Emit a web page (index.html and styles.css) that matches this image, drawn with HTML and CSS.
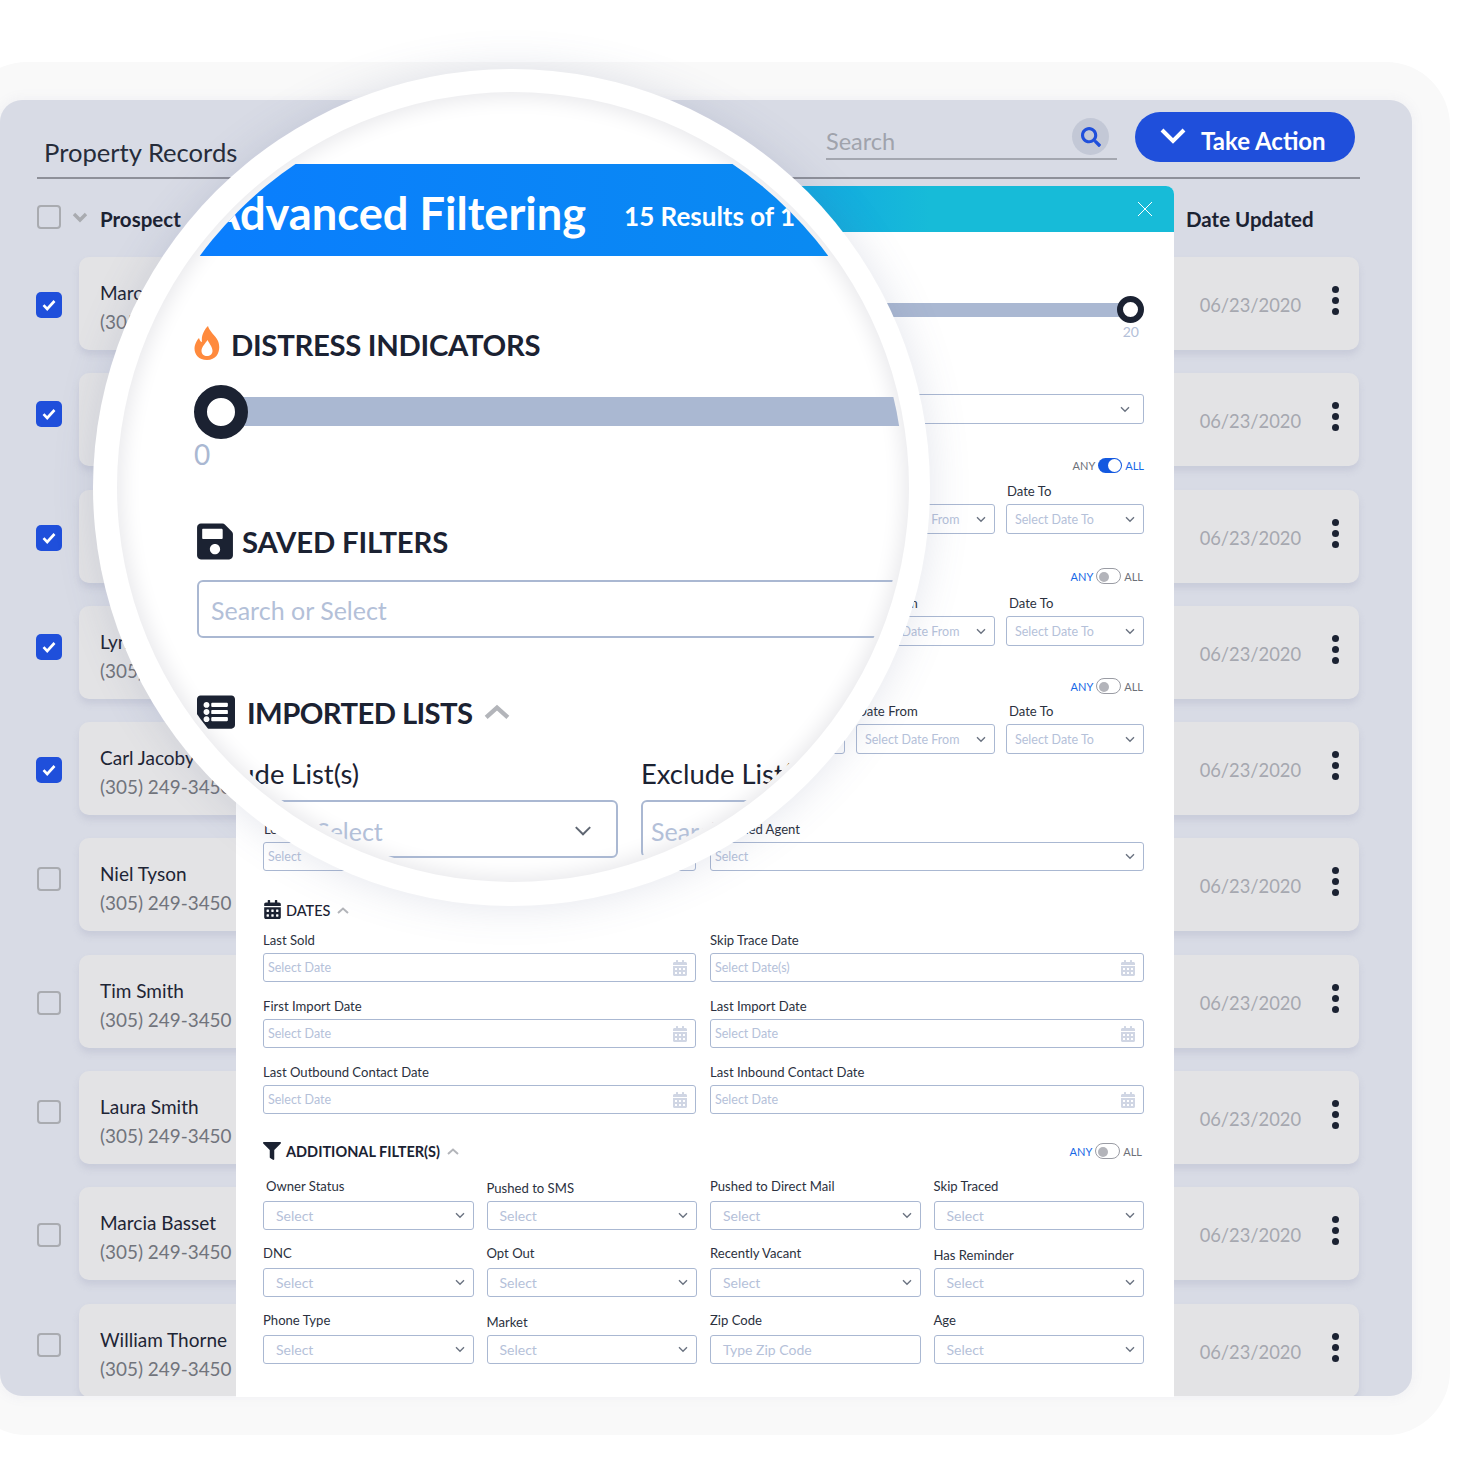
FILE: index.html
```html
<!DOCTYPE html>
<html>
<head>
  <meta charset="utf-8">
  <title>Property Records</title>
  <link rel="stylesheet" href="styles.css">
</head>
<body>

<svg class="sprite" xmlns="http://www.w3.org/2000/svg">
  <symbol id="i-chev" viewBox="0 0 12 8"><path d="M1.2 1.4 6 6.2l4.8-4.8" fill="none" stroke="currentColor" stroke-width="1.6"/></symbol>
  <symbol id="i-up" viewBox="0 0 24 14"><path d="M2 12 12 3l10 9" fill="none" stroke="currentColor" stroke-width="4"/></symbol>
  <symbol id="i-cal" viewBox="0 0 448 512"><path fill="currentColor" d="M0 464c0 26.5 21.5 48 48 48h352c26.5 0 48-21.5 48-48V192H0v272zm320-196c0-6.6 5.4-12 12-12h40c6.6 0 12 5.4 12 12v40c0 6.6-5.4 12-12 12h-40c-6.6 0-12-5.4-12-12v-40zm0 128c0-6.6 5.4-12 12-12h40c6.6 0 12 5.4 12 12v40c0 6.6-5.4 12-12 12h-40c-6.6 0-12-5.4-12-12v-40zM192 268c0-6.6 5.4-12 12-12h40c6.6 0 12 5.4 12 12v40c0 6.6-5.4 12-12 12h-40c-6.6 0-12-5.4-12-12v-40zm0 128c0-6.6 5.4-12 12-12h40c6.6 0 12 5.4 12 12v40c0 6.6-5.4 12-12 12h-40c-6.6 0-12-5.4-12-12v-40zM64 268c0-6.6 5.4-12 12-12h40c6.6 0 12 5.4 12 12v40c0 6.6-5.4 12-12 12H76c-6.6 0-12-5.4-12-12v-40zm0 128c0-6.6 5.4-12 12-12h40c6.6 0 12 5.4 12 12v40c0 6.6-5.4 12-12 12H76c-6.6 0-12-5.4-12-12v-40zM400 64h-48V16c0-8.8-7.2-16-16-16h-32c-8.8 0-16 7.2-16 16v48H160V16c0-8.8-7.2-16-16-16h-32c-8.8 0-16 7.2-16 16v48H48C21.5 64 0 85.5 0 112v48h448v-48c0-26.5-21.5-48-48-48z"/></symbol>
  <symbol id="i-check" viewBox="0 0 14 12"><path d="M1.5 6.2 5.2 10l7.3-8" fill="none" stroke="#fff" stroke-width="2.6"/></symbol>
</svg>

<div class="stage">
  <div class="halo">
    <div class="board">
      <div class="top-bar">
        <div class="page-title">Property Records</div>
        <div class="search">
          <span>Search</span>
          <span class="search-btn">
            <svg viewBox="0 0 512 512"><path fill="#1f4fdb" d="M505 442.7L405.3 343c-4.5-4.5-10.6-7-17-7H372c27.6-35.3 44-79.7 44-128C416 93.1 322.9 0 208 0S0 93.1 0 208s93.1 208 208 208c48.3 0 92.7-16.4 128-44v16.3c0 6.4 2.5 12.5 7 17l99.7 99.7c9.4 9.4 24.6 9.4 33.9 0l28.3-28.3c9.4-9.4 9.4-24.6.1-34zM208 336c-70.7 0-128-57.2-128-128 0-70.7 57.2-128 128-128 70.7 0 128 57.2 128 128 0 70.7-57.2 128-128 128z"/></svg>
          </span>
        </div>
        <button class="take-action">
          <svg viewBox="0 0 28 18"><path d="M3 3l11 11L25 3" fill="none" stroke="#fff" stroke-width="4"/></svg>
          <span>Take Action</span>
        </button>
      </div>

      <div class="col-head">
        <span class="box"></span>
        <svg class="head-chev" viewBox="0 0 16 11"><path d="M2 2l6 6 6-6" fill="none" stroke="#a9abb0" stroke-width="3.4"/></svg>
        <span class="col-name">Prospect</span>
        <span class="col-date">Date Updated</span>
      </div>

      <div class="records">
        <div class="rec">
          <span class="box on"><svg><use href="#i-check"/></svg></span>
          <div class="card"><div class="who"><div class="name">Marcus Hill</div><div class="phone">(305) 249-3450</div></div><div class="date">06/23/2020</div><div class="kebab"><i></i><i></i><i></i></div></div>
        </div>
        <div class="rec">
          <span class="box on"><svg><use href="#i-check"/></svg></span>
          <div class="card"><div class="date">06/23/2020</div><div class="kebab"><i></i><i></i><i></i></div></div>
        </div>
        <div class="rec">
          <span class="box on"><svg><use href="#i-check"/></svg></span>
          <div class="card"><div class="date">06/23/2020</div><div class="kebab"><i></i><i></i><i></i></div></div>
        </div>
        <div class="rec">
          <span class="box on"><svg><use href="#i-check"/></svg></span>
          <div class="card"><div class="who"><div class="name">Lynn Hart</div><div class="phone">(305) 249-3450</div></div><div class="date">06/23/2020</div><div class="kebab"><i></i><i></i><i></i></div></div>
        </div>
        <div class="rec">
          <span class="box on"><svg><use href="#i-check"/></svg></span>
          <div class="card"><div class="who"><div class="name">Carl Jacoby</div><div class="phone">(305) 249-3450</div></div><div class="date">06/23/2020</div><div class="kebab"><i></i><i></i><i></i></div></div>
        </div>
        <div class="rec">
          <span class="box"></span>
          <div class="card"><div class="who"><div class="name">Niel Tyson</div><div class="phone">(305) 249-3450</div></div><div class="date">06/23/2020</div><div class="kebab"><i></i><i></i><i></i></div></div>
        </div>
        <div class="rec">
          <span class="box"></span>
          <div class="card"><div class="who"><div class="name">Tim Smith</div><div class="phone">(305) 249-3450</div></div><div class="date">06/23/2020</div><div class="kebab"><i></i><i></i><i></i></div></div>
        </div>
        <div class="rec">
          <span class="box"></span>
          <div class="card"><div class="who"><div class="name">Laura Smith</div><div class="phone">(305) 249-3450</div></div><div class="date">06/23/2020</div><div class="kebab"><i></i><i></i><i></i></div></div>
        </div>
        <div class="rec">
          <span class="box"></span>
          <div class="card"><div class="who"><div class="name">Marcia Basset</div><div class="phone">(305) 249-3450</div></div><div class="date">06/23/2020</div><div class="kebab"><i></i><i></i><i></i></div></div>
        </div>
        <div class="rec">
          <span class="box"></span>
          <div class="card"><div class="who"><div class="name">William Thorne</div><div class="phone">(305) 249-3450</div></div><div class="date">06/23/2020</div><div class="kebab"><i></i><i></i><i></i></div></div>
        </div>
      </div>
    </div>
  </div>

  <!-- filter modal sitting on top of the table -->
  <div class="modal">
    <div class="modal-head">
      <svg class="close" viewBox="0 0 16 16"><path d="M1 1l14 14M15 1L1 15" stroke="#fff" stroke-width="1"/></svg>
    </div>

    <div class="mini-slider"><span class="mini-knob"></span></div>
    <div class="mini-value">20</div>

    <div class="sel saved-sel"><svg class="chev"><use href="#i-chev"/></svg></div>

    <div class="toggle-row t1">
      <span class="opt">ANY</span><span class="switch on"></span><span class="opt blue">ALL</span>
    </div>
    <div class="date-pair p1">
      <div class="fld"><label>Date From</label><div class="sel"><span>Select Date From</span><svg class="chev"><use href="#i-chev"/></svg></div></div>
      <div class="fld"><label>Date To</label><div class="sel"><span>Select Date To</span><svg class="chev"><use href="#i-chev"/></svg></div></div>
    </div>

    <div class="toggle-row t2">
      <span class="opt blue">ANY</span><span class="switch"></span><span class="opt">ALL</span>
    </div>
    <div class="date-pair p2">
      <div class="fld"><label>Date From</label><div class="sel"><span>Select Date From</span><svg class="chev"><use href="#i-chev"/></svg></div></div>
      <div class="fld"><label class="shift">Date To</label><div class="sel"><span>Select Date To</span><svg class="chev"><use href="#i-chev"/></svg></div></div>
    </div>

    <div class="toggle-row t3">
      <span class="opt blue">ANY</span><span class="switch"></span><span class="opt">ALL</span>
    </div>
    <div class="date-pair p3">
      <div class="fld grow"><label></label><div class="sel"></div></div>
      <div class="fld"><label>Date From</label><div class="sel"><span>Select Date From</span><svg class="chev"><use href="#i-chev"/></svg></div></div>
      <div class="fld"><label class="shift">Date To</label><div class="sel"><span>Select Date To</span><svg class="chev"><use href="#i-chev"/></svg></div></div>
    </div>

    <div class="two-col lead-row">
      <div class="fld"><label>Lead Status</label><div class="sel"><span>Select</span></div></div>
      <div class="fld"><label class="agent">Assigned Agent</label><div class="sel"><span>Select</span><svg class="chev"><use href="#i-chev"/></svg></div></div>
    </div>

    <div class="mhead dates-head">
      <svg class="cal-big"><use href="#i-cal"/></svg>
      <span>DATES</span>
      <svg class="up"><use href="#i-up"/></svg>
    </div>
    <div class="two-col date-grid">
      <div class="fld"><label>Last Sold</label><div class="sel"><span>Select Date</span><svg class="cal"><use href="#i-cal"/></svg></div></div>
      <div class="fld"><label>Skip Trace Date</label><div class="sel"><span>Select Date(s)</span><svg class="cal"><use href="#i-cal"/></svg></div></div>
      <div class="fld"><label>First Import Date</label><div class="sel"><span>Select Date</span><svg class="cal"><use href="#i-cal"/></svg></div></div>
      <div class="fld"><label>Last Import Date</label><div class="sel"><span>Select Date</span><svg class="cal"><use href="#i-cal"/></svg></div></div>
      <div class="fld"><label>Last Outbound Contact Date</label><div class="sel"><span>Select Date</span><svg class="cal"><use href="#i-cal"/></svg></div></div>
      <div class="fld"><label>Last Inbound Contact Date</label><div class="sel"><span>Select Date</span><svg class="cal"><use href="#i-cal"/></svg></div></div>
    </div>

    <div class="add-head">
      <div class="mhead">
        <svg class="funnel" viewBox="0 0 512 512"><path fill="#1b2232" d="M487.976 0H24.028C2.71 0-8.047 25.866 7.058 40.971L192 225.941V432c0 7.831 3.821 15.17 10.237 19.662l80 55.98C298.02 518.69 320 507.493 320 487.98V225.941l184.947-184.97C520.021 25.896 509.338 0 487.976 0z"/></svg>
        <span>ADDITIONAL FILTER(S)</span>
        <svg class="up"><use href="#i-up"/></svg>
      </div>
      <div class="toggle-row t4">
        <span class="opt blue">ANY</span><span class="switch"></span><span class="opt">ALL</span>
      </div>
    </div>

    <div class="four-col">
      <div class="fld"><label class="inset">Owner Status</label><div class="sel"><span>Select</span><svg class="chev"><use href="#i-chev"/></svg></div></div>
      <div class="fld"><label class="low">Pushed to SMS</label><div class="sel"><span>Select</span><svg class="chev"><use href="#i-chev"/></svg></div></div>
      <div class="fld"><label>Pushed to Direct Mail</label><div class="sel"><span>Select</span><svg class="chev"><use href="#i-chev"/></svg></div></div>
      <div class="fld"><label>Skip Traced</label><div class="sel"><span>Select</span><svg class="chev"><use href="#i-chev"/></svg></div></div>
      <div class="fld"><label>DNC</label><div class="sel"><span>Select</span><svg class="chev"><use href="#i-chev"/></svg></div></div>
      <div class="fld"><label>Opt Out</label><div class="sel"><span>Select</span><svg class="chev"><use href="#i-chev"/></svg></div></div>
      <div class="fld"><label>Recently Vacant</label><div class="sel"><span>Select</span><svg class="chev"><use href="#i-chev"/></svg></div></div>
      <div class="fld"><label class="low">Has Reminder</label><div class="sel"><span>Select</span><svg class="chev"><use href="#i-chev"/></svg></div></div>
      <div class="fld"><label>Phone Type</label><div class="sel"><span>Select</span><svg class="chev"><use href="#i-chev"/></svg></div></div>
      <div class="fld"><label class="low">Market</label><div class="sel"><span>Select</span><svg class="chev"><use href="#i-chev"/></svg></div></div>
      <div class="fld"><label>Zip Code</label><div class="sel"><span>Type Zip Code</span></div></div>
      <div class="fld"><label>Age</label><div class="sel"><span>Select</span><svg class="chev"><use href="#i-chev"/></svg></div></div>
    </div>
  </div>

  <!-- magnifier over the modal -->
  <div class="lens">
    <div class="lens-ring"></div>
    <div class="lens-view">
      <div class="lens-head">
        <span class="lens-title">Advanced Filtering</span>
        <span class="lens-count">15 Results of 1</span>
      </div>

      <div class="lens-body">
        <div class="lhead first">
          <svg class="flame" viewBox="0 0 26 34"><path fill="#ff8a3d" fill-rule="evenodd" d="M14 0C15 5 21 9 24 15 27 22 25 34 13 34 3 34-1 26 1 19 2 16 3 14 5 12 6 15 7 16 8 16 7 10 10 4 14 0ZM13.5 14C11 18 7.5 21 7.5 25 7.5 28 10 30 13 30 16 30 18.5 28 18.5 25 18.5 21 15.5 18 13.5 14Z"/></svg>
          <span>DISTRESS INDICATORS</span>
        </div>
        <div class="big-slider"><span class="big-knob"></span></div>
        <div class="big-value">0</div>

        <div class="lhead saved">
          <svg class="floppy" viewBox="0 0 448 512"><path fill="#1b2232" d="M433.941 129.941l-83.882-83.882A48 48 0 0 0 316.118 32H48C21.49 32 0 53.49 0 80v352c0 26.51 21.49 48 48 48h352c26.51 0 48-21.49 48-48V163.882a48 48 0 0 0-14.059-33.941zM224 416c-35.346 0-64-28.654-64-64 0-35.346 28.654-64 64-64s64 28.654 64 64c0 35.346-28.654 64-64 64zm96-304.52V212c0 6.627-5.373 12-12 12H76c-6.627 0-12-5.373-12-12V108c0-6.627 5.373-12 12-12h228.52c3.183 0 6.235 1.264 8.485 3.515l3.48 3.48A11.996 11.996 0 0 1 320 111.48z"/></svg>
          <span>SAVED FILTERS</span>
        </div>
        <div class="big-input wide">Search or Select</div>

        <div class="lhead imported">
          <svg class="listicon" viewBox="0 0 512 512"><path fill="#1b2232" d="M464 480H48c-26.51 0-48-21.49-48-48V80c0-26.51 21.49-48 48-48h416c26.51 0 48 21.49 48 48v352c0 26.51-21.49 48-48 48zM128 120c-22.091 0-40 17.909-40 40s17.909 40 40 40 40-17.909 40-40-17.909-40-40-40zm0 96c-22.091 0-40 17.909-40 40s17.909 40 40 40 40-17.909 40-40-17.909-40-40-40zm0 96c-22.091 0-40 17.909-40 40s17.909 40 40 40 40-17.909 40-40-17.909-40-40-40zm288-136v-32c0-6.627-5.373-12-12-12H204c-6.627 0-12 5.373-12 12v32c0 6.627 5.373 12 12 12h200c6.627 0 12-5.373 12-12zm0 96v-32c0-6.627-5.373-12-12-12H204c-6.627 0-12 5.373-12 12v32c0 6.627 5.373 12 12 12h200c6.627 0 12-5.373 12-12zm0 96v-32c0-6.627-5.373-12-12-12H204c-6.627 0-12 5.373-12 12v32c0 6.627 5.373 12 12 12h200c6.627 0 12-5.373 12-12z"/></svg>
          <span>IMPORTED LISTS</span>
          <svg class="lens-up"><use href="#i-up"/></svg>
        </div>

        <div class="list-cols">
          <div class="list-col">
            <div class="list-label">Include List(s)</div>
            <div class="big-input">Search or Select<svg class="big-chev" viewBox="0 0 12 8"><path d="M1.2 1.4 6 6.2l4.8-4.8" fill="none" stroke="#5f6672" stroke-width="1.3"/></svg></div>
          </div>
          <div class="list-col">
            <div class="list-label">Exclude List(s)</div>
            <div class="big-input">Search or Select</div>
          </div>
        </div>
      </div>
    </div>
  </div>
</div>

</body>
</html>
```

FILE: styles.css
```css
* {
  box-sizing: border-box;
}

html, body {
  margin: 0;
  background: #fff;
}

body {
  font-family: "Lato", "Liberation Sans", sans-serif;
  color: #1b2232;
}

.sprite {
  display: none;
}

.stage {
  position: relative;
  width: 1478px;
  height: 1467px;
  overflow: hidden;
}

.halo {
  margin: 62px 0 0 -37px;
  width: 1487px;
  height: 1373px;
  padding: 38px 37px 0;
  border-radius: 64px;
  background: #f9f9f9;
}

.board {
  width: 1412px;
  height: 1296px;
  border-radius: 22px;
  background: #d8dbe5;
  overflow: hidden;
  box-shadow: 0 0 10px 4px #f3f3f5;
}

/* top bar */
.top-bar {
  display: flex;
  align-items: flex-start;
  width: 1323px;
  height: 79px;
  margin-left: 37px;
  padding-left: 7px;
  border-bottom: 2px solid #8e9099;
}

.page-title {
  margin-top: 35px;
  font-size: 25.6px;
  line-height: 34px;
  color: #262c3a;
}

.search {
  display: flex;
  justify-content: space-between;
  width: 291px;
  height: 42px;
  margin: 18px 0 0 auto;
  border-bottom: 2px solid #a4a7b0;
  font-size: 23.5px;
  color: #a0a3ac;
}

.search span:first-child {
  margin-top: 8px;
  line-height: 30px;
}

.search-btn {
  display: flex;
  align-items: center;
  justify-content: center;
  width: 37px;
  height: 37px;
  margin-right: 8px;
  border-radius: 50%;
  background: #c3c8d6;
}

.search-btn svg {
  width: 20px;
  height: 22px;
}

.take-action {
  display: flex;
  align-items: center;
  width: 220px;
  height: 50px;
  margin: 12px 5px 0 18px;
  padding: 0 0 0 24px;
  border: 0;
  border-radius: 25px;
  background: #1f4fdb;
  color: #fff;
  font-family: inherit;
  font-size: 24px;
  font-weight: 700;
}

.take-action svg {
  width: 28px;
  height: 18px;
  margin: -2px 14px 0 0;
}

.take-action span {
  margin-top: 6px;
}

/* table */
.col-head {
  display: flex;
  align-items: center;
  height: 78px;
  padding-left: 37px;
}

.col-head .box {
  margin-top: -3px;
}

.box {
  flex: none;
  width: 24px;
  height: 24px;
  border: 2px solid #a9abb0;
  border-radius: 4px;
}

.head-chev {
  width: 16px;
  height: 11px;
  margin: -2px 0 0 11px;
}

.col-name, .col-date {
  margin-top: 2px;
  font-size: 20.5px;
  font-weight: 700;
}

.col-name {
  margin-left: 12px;
}

.col-date {
  margin-left: auto;
  width: 174px;
  margin-right: 52px;
}

.records {
  display: flex;
  flex-direction: column;
  gap: 23.3px;
}

.rec {
  display: flex;
  align-items: center;
  height: 93px;
  flex: none;
  padding-left: 37px;
}

.rec .box.on {
  width: 26px;
  height: 26px;
  margin-left: -1px;
  border: 0;
  border-radius: 5px;
  background: #1f4fdb;
  display: flex;
  align-items: center;
  justify-content: center;
}

.rec .box svg {
  width: 14px;
  height: 12px;
}

.rec:nth-child(odd) .box {
  margin-top: 3px;
}

.rec:nth-child(even) .box {
  margin-bottom: 11px;
}

.card {
  display: flex;
  align-items: center;
  width: 1280px;
  height: 93px;
  margin-left: 18px;
  padding: 0 20px 0 21px;
  border-radius: 10px;
  background: #e3e3e5;
  box-shadow: 0 5px 6px rgba(165, 170, 192, .3);
}

.rec .box.on + .card {
  margin-left: 17px;
}

.who {
  padding-top: 7px;
  line-height: 29px;
}

.name {
  font-size: 19px;
  color: #1e2535;
}

.phone {
  font-size: 18.9px;
  color: #71747c;
}

.date {
  margin: 3px 0 0 auto;
  font-size: 18.3px;
  color: #a6a8b0;
}

.kebab {
  display: flex;
  flex-direction: column;
  gap: 4px;
  margin: -6px 0 0 31px;
}

.kebab i {
  width: 7px;
  height: 7px;
  border-radius: 50%;
  background: #1b2232;
}

/* modal */
.modal {
  position: absolute;
  left: 236px;
  top: 186px;
  width: 938px;
  height: 1211px;
  padding: 0 30px 0 27px;
  border-radius: 8px 8px 0 0;
  background: #fff;
}

.modal-head {
  display: flex;
  align-items: center;
  justify-content: flex-end;
  height: 46px;
  margin: 0 -30px 0 -27px;
  padding-right: 21px;
  border-radius: 8px 8px 0 0;
  background: linear-gradient(90deg, #0a7cff 0, #0a8cf0 40%, #17bbd8 74%);
}

.close {
  width: 16px;
  height: 16px;
}

.mini-slider {
  position: relative;
  height: 14px;
  margin: 71px 14px 0 0;
  background: #aab8d2;
}

.mini-knob {
  position: absolute;
  right: -14px;
  top: -7px;
  width: 27px;
  height: 27px;
  border: 6px solid #1b2232;
  border-radius: 50%;
  background: #fff;
}

.mini-value {
  margin: 8px 5px 0 0;
  font-size: 14px;
  line-height: 14px;
  text-align: right;
  color: #b3c0d8;
}

.sel {
  display: flex;
  align-items: center;
  justify-content: space-between;
  height: 30px;
  padding: 0 8px;
  border: 1px solid #aab8d2;
  border-radius: 3px;
  background: #fff;
  font-size: 12.5px;
  color: #b5c1d9;
}

.sel .chev {
  flex: none;
  width: 10px;
  height: 7px;
  margin-left: auto;
  color: #6a7280;
}

.sel .cal {
  flex: none;
  width: 14px;
  height: 16px;
  margin-left: auto;
  color: #d0d6e4;
}

.saved-sel {
  margin-top: 55px;
  padding-right: 13px;
}

.toggle-row {
  display: flex;
  align-items: center;
  justify-content: flex-end;
  gap: 3px;
  height: 16px;
  font-size: 11px;
  color: #6c7078;
}

.t1 { margin-top: 33px; }
.t2 { margin-top: 34px; padding-right: 1px; }
.t3 { margin-top: 32px; padding-right: 1px; }
.t4 { padding-right: 2px; }

.opt.blue {
  color: #1768e6;
}

.switch {
  display: flex;
  width: 25px;
  height: 16px;
  padding: 2px;
  border: 1.5px solid #9a9ca4;
  border-radius: 8px;
  background: #fff;
}

.switch::before {
  content: "";
  width: 10px;
  height: 10px;
  margin-top: .5px;
  border-radius: 50%;
  background: #b3b4ba;
}

.switch.on {
  justify-content: flex-end;
  width: 24px;
  height: 15px;
  border: 0;
  padding: 1px;
  background: #1459e0;
}

.switch.on::before {
  width: 13px;
  height: 13px;
  margin-top: 0;
  background: #fff;
}

.fld label {
  display: block;
  height: 23px;
  font-size: 13.1px;
  line-height: 20px;
  color: #2b3140;
}

.date-pair {
  display: flex;
  justify-content: flex-end;
  gap: 11px;
}

.date-pair .fld {
  width: 139px;
}

.date-pair .fld:last-child {
  width: 138px;
}

.date-pair .fld.grow {
  flex: 1;
}

.date-pair .fld label {
  padding-left: 1px;
}

.date-pair label.shift {
  padding-left: 3px;
}

.p1 { margin-top: 8px; }
.p2 { margin-top: 9px; }
.p3 { margin-top: 7px; }

.two-col {
  display: grid;
  grid-template-columns: 433px 434px;
  column-gap: 14px;
}

.two-col .sel {
  height: 29px;
  padding: 0 8px 0 4px;
}

.lead-row {
  margin-top: 65px;
}

.lead-row label {
  padding-left: 1px;
}

.mhead {
  display: flex;
  align-items: center;
  font-size: 14.5px;
  font-weight: 700;
}

.dates-head {
  height: 20px;
  margin-top: 29px;
  font-weight: 500;
}

.cal-big {
  width: 17px;
  height: 19px;
  margin: -2px 5px 0 1px;
  color: #1b2232;
}

.up {
  width: 12px;
  height: 7px;
  margin-left: 7px;
  color: #b3b5ba;
}

.date-grid {
  row-gap: 14px;
  margin-top: 10px;
}

.add-head {
  display: flex;
  align-items: center;
  justify-content: space-between;
  height: 22px;
  margin-top: 26px;
}

.funnel {
  width: 18px;
  height: 18px;
  margin-right: 5px;
}

.four-col {
  display: grid;
  grid-template-columns: repeat(4, 1fr);
  column-gap: 13px;
  row-gap: 13px;
  margin-top: 14px;
}

.four-col .sel {
  height: 29px;
  padding: 0 8px 0 12px;
  font-size: 14px;
}

.four-col .fld label {
  height: 25px;
}

.four-col label.low {
  padding-top: 2px;
}

.four-col label.inset {
  padding-left: 3px;
}

/* lens */
.lens {
  position: absolute;
  left: 93px;
  top: 69px;
  width: 837px;
  height: 837px;
  border-radius: 50%;
  background: #fff;
  box-shadow: 0 0 40px rgba(90, 100, 140, .17);
}

.lens-ring {
  position: absolute;
  left: 24px;
  top: 23px;
  width: 792px;
  height: 790px;
  border-radius: 50%;
  box-shadow: inset 0 0 20px 5px #e9e9ec;
}

.lens-view {
  position: absolute;
  left: 31px;
  top: 28px;
  width: 780px;
  height: 780px;
  border-radius: 50%;
  overflow: hidden;
}

.lens-head {
  display: flex;
  align-items: center;
  height: 92px;
  margin-top: 67px;
  padding: 0 0 0 85px;
  background: linear-gradient(90deg, #0a7cff 0, #0a8cf0 100%);
  color: #fff;
}

.lens-title {
  margin-top: 5px;
  font-size: 45.2px;
  font-weight: 700;
  white-space: nowrap;
}

.lens-count {
  margin: 12px 0 0 38px;
  font-size: 26px;
  font-weight: 700;
  white-space: nowrap;
}

.lens-body {
  padding-left: 70px;
  width: 1000px;
}

.lhead {
  display: flex;
  align-items: center;
  height: 36px;
  font-size: 29.3px;
  font-weight: 700;
  letter-spacing: -.3px;
}

.lhead.first { margin-top: 70px; }
.lhead.saved { margin-top: 54px; letter-spacing: -.15px; }
.lhead.imported { margin-top: 56px; letter-spacing: -.6px; }

.flame {
  width: 26px;
  height: 34px;
  margin: -2px 11px 0 0;
}

.floppy {
  width: 36px;
  height: 41px;
  margin: 0 9px 0 3px;
}

.listicon {
  width: 38px;
  height: 38px;
  margin: 0 12px 0 3px;
}

.lens-up {
  width: 26px;
  height: 16px;
  margin-left: 12px;
  color: #b3b5ba;
}

.big-slider {
  position: relative;
  width: 900px;
  height: 29px;
  margin: 35px 0 0 4px;
  background: #aab8d2;
}

.big-knob {
  position: absolute;
  left: -4px;
  top: -12px;
  width: 54px;
  height: 54px;
  border: 13px solid #1b2232;
  border-radius: 50%;
  background: #fff;
}

.big-value {
  margin-top: 13px;
  font-size: 28px;
  line-height: 30px;
  color: #aab8d2;
}

.big-input {
  display: flex;
  align-items: center;
  height: 58px;
  padding: 4px 0 0 8px;
  border: 2px solid #aab8d2;
  border-radius: 6px;
  font-size: 25px;
  color: #b3c0d8;
}

.big-input.wide {
  width: 800px;
  margin: 21px 0 0 3px;
  padding: 2px 0 0 12px;
}

.big-chev {
  width: 18px;
  height: 12px;
  margin: 0 24px 0 auto;
}

.list-cols {
  display: flex;
  gap: 23px;
  margin: 27px 0 0 3px;
}

.list-col {
  width: 421px;
  flex: none;
}

.list-label {
  height: 43px;
  font-size: 27.4px;
  line-height: 33px;
}
```
